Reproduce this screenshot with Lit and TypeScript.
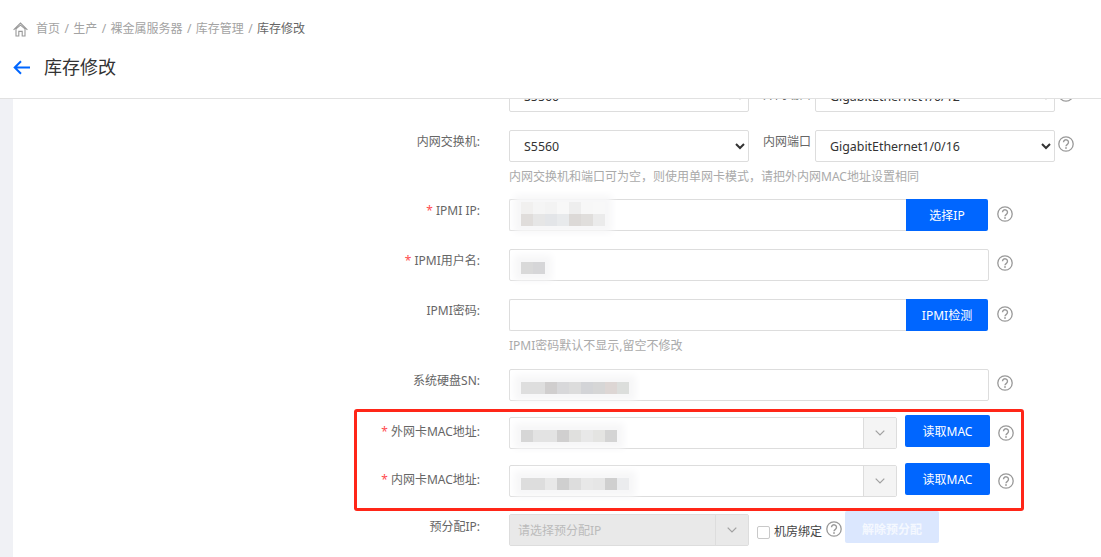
import { LitElement, html, css, svg } from "lit";
import { customElement } from "lit/decorators.js";

type Mask = { y: number; rows: string[][] };

const ipMask: Mask = {
  y: 2,
  rows: [
    ["#f1f0ef", "#f5f5f5", "#f3f3f3", "#f8f8f8", "#eeeeee", "#f7f7f7", "#f8f8f8"],
    ["#e0dddb", "#e6e6e6", "#e3e5e8", "#e8eaec", "#dcd9d7", "#e0dedc", "#ebebeb"],
  ],
};
const userMask: Mask = { y: 12, rows: [["#d9d9d9", "#d6d6d8"]] };
const snMask: Mask = {
  y: 12,
  rows: [["#dedede", "#dedede", "#d0cece", "#d8d8da", "#dcdcdc", "#d3d4d7", "#d6d6d6", "#ddd6d4", "#dcdedc"]],
};
const mac1Mask: Mask = {
  y: 12,
  rows: [["#d6d6d6", "#e3e3e3", "#e3e3e3", "#d0cfcf", "#e0e0de", "#e8e8e8", "#e4e4e2", "#d4d4d4"]],
};
const mac2Mask: Mask = {
  y: 12,
  rows: [["#dddddd", "#dddddd", "#e8e8e8", "#cfcfcf", "#dddddd", "#e8e8e8", "#e6e6e6", "#cfcfcf", "#ebecee"]],
};

const helpIcon = svg`<circle cx="8" cy="8" r="7.2" fill="none" stroke="#999" stroke-width="1.3"/><path d="M5.5 6.3a2.5 2.5 0 1 1 3.9 2c-.9.6-1.4 1-1.4 2" fill="none" stroke="#999" stroke-width="1.4"/><rect x="7.2" y="11.2" width="1.6" height="1.6" fill="#999"/>`;

@customElement("app-root")
export class AppRoot extends LitElement {
  static styles = css`
    :host {
      display: block;
      position: relative;
      width: 1101px;
      height: 557px;
      overflow: hidden;
      background: #fff;
      font-family: "Noto Sans", "Noto Sans CJK SC", sans-serif;
      font-size: 12px;
      color: #666;
    }
    * { box-sizing: border-box; }
    .header {
      height: 99px;
      border-bottom: 1px solid #e1e1e1;
      padding: 22px 0 0 13px;
    }
    .crumbs {
      display: flex;
      align-items: center;
      height: 14px;
      color: #a3a3a3;
      line-height: 14px;
    }
    .crumbs .home { width: 15px; height: 15px; margin-right: 8px; flex: none; }
    .crumbs .sep { width: 13.25px; text-align: center; }
    .crumbs .last { color: #666; }
    .title {
      display: flex;
      align-items: center;
      margin-top: 18px;
      height: 24px;
      font-size: 18px;
      color: #333;
    }
    .title svg { width: 17px; height: 15px; margin: 2px 14px 0 0; flex: none; }
    .body { display: flex; height: 458px; overflow: hidden; }
    .strip { width: 13px; background: #f0f1f5; flex: none; }
    .form { flex: 1; margin-top: -19px; display: flex; flex-direction: column; }
    .row { display: flex; align-items: flex-start; height: 32px; }
    .mt18 { margin-top: 18px; }
    .mt16 { margin-top: 16px; }
    .mt17 { margin-top: 17px; }
    .label {
      width: 496px;
      flex: none;
      padding-right: 29px;
      text-align: right;
      line-height: 24px;
      white-space: nowrap;
    }
    .label.low3 { padding-top: 3px; }
    .label.low1 { padding-top: 1px; }
    .star { color: #ff4d4f; }
    .sel {
      width: 240px;
      height: 32px;
      flex: none;
      border: 1px solid #ddd;
      border-radius: 2px;
      background: #fff;
      padding-left: 10px;
      font: 12.4px "Noto Sans", "Noto Sans CJK SC", sans-serif;
      color: #333;
      outline: none;
    }
    .port { width: 48px; margin: 0 4px 0 14px; line-height: 24px; flex: none; white-space: nowrap; color: #666; }
    .port.first { padding-top: 3px; }
    .help { width: 16px; height: 16px; flex: none; display: block; }
    .help.h-sel { margin: 6px 0 0 3px; }
    .help.h-in { margin: 7px 0 0 9px; }
    .help.h-full { margin: 6px 0 0 8px; }
    .help.h-mac { margin: 8px 0 0 8px; }
    .hint { margin: 7px 0 0 496px; line-height: 16px; color: #aaa; white-space: nowrap; }
    .h30 { height: 30px; }
    .h31 { height: 31px; }
    .input {
      display: flex;
      align-items: flex-start;
      height: 32px;
      flex: none;
      border: 1px solid #ddd;
      border-radius: 2px;
      background: #fff;
      padding-left: 11px;
    }
    .w397 { width: 397px; border-right: 0; border-radius: 2px 0 0 2px; }
    .w480 { width: 480px; }
    .btn {
      flex: none;
      height: 32px;
      border: 0;
      border-radius: 0 2px 2px 0;
      background: #0066ff;
      color: #fff;
      font: inherit;
      padding: 0;
      text-align: center;
    }
    .w82 { width: 82px; }
    .w85 { width: 85px; border-radius: 2px; margin: -2px 0 0 8px; }
    .combo {
      display: flex;
      width: 388px;
      height: 32px;
      flex: none;
      border: 1px solid #ddd;
      border-radius: 2px;
      background: #fff;
    }
    .combo .value { flex: 1; padding-left: 11px; display: flex; align-items: flex-start; }
    .caret {
      width: 33px;
      flex: none;
      background: #f4f4f4;
      border-left: 1px solid #ddd;
      display: flex;
      align-items: center;
      justify-content: center;
    }
    .caret svg { width: 10px; height: 6px; display: block; }
    .combo.off { width: 240px; background: #e9e9e9; }
    .combo.off .value { background: #e9e9e9; padding-left: 8px; align-items: center; color: #bbb; font-size: 12px; }
    .combo.off .caret { background: #e9e9e9; }
    .mask { flex: none; box-shadow: 0 0 7px 7px #f7f7f8; background: #f7f7f8; }
    .mrow { display: flex; }
    .cell { width: 12px; height: 12px; flex: none; }
    .check {
      width: 13px;
      height: 13px;
      flex: none;
      margin: 12px 0 0 8px;
      border: 1px solid #c9c9c9;
      border-radius: 2px;
      background: #fff;
    }
    .bind { margin: 6px 0 0 4px; width: 48px; flex: none; line-height: 24px; color: #444; white-space: nowrap; }
    .help.h-bind { margin: 7px 0 0 4px; }
    .btn.ghost {
      width: 94px;
      margin: -3px 0 0 3px;
      padding-top: 3px;
      border-radius: 2px;
      background: #dbe7fe;
      color: #f4f8ff;
      font-weight: bold;
    }
    .redbox {
      position: absolute;
      left: 354px;
      top: 409px;
      width: 670px;
      height: 102px;
      border: 3px solid #ff2618;
      border-radius: 3px;
      pointer-events: none;
    }
  `;

  private help(cls: string) {
    return html`<svg class="help ${cls}" viewBox="0 0 16 16">${helpIcon}</svg>`;
  }

  private mask(m: Mask) {
    return html`<div class="mask" style="margin-top:${m.y}px">
      ${m.rows.map(
        (r) => html`<div class="mrow">${r.map((c) => html`<div class="cell" style="background:${c}"></div>`)}</div>`
      )}
    </div>`;
  }

  private caret() {
    return html`<div class="caret">
      <svg viewBox="0 0 10 6"><path d="M.7.7 5 5 9.3.7" fill="none" stroke="#a0a0a0" stroke-width="1.2"/></svg>
    </div>`;
  }

  private portRow(cls: string, sw: string, name: string, portName: string, port: string, portCls: string) {
    return html`<div class="row ${cls}">
      <div class="label">${name}</div>
      <select class="sel"><option>${sw}</option></select>
      <div class="port ${portCls}">${portName}</div>
      <select class="sel"><option>${port}</option></select>
      ${this.help("h-sel")}
    </div>`;
  }

  render() {
    return html`
      <div class="header">
        <div class="crumbs">
          <svg class="home" viewBox="0 0 15 15" fill="none" stroke="#999" stroke-width="1.1">
            <path d="M.6 7.9 7.5 1l6.9 6.9M3 6.9 7.5 3.2 12 6.9V14H9.2V9.4H5.8V14H3z"/>
          </svg>
          <span>首页</span><span class="sep">/</span>
          <span>生产</span><span class="sep">/</span>
          <span>裸金属服务器</span><span class="sep">/</span>
          <span>库存管理</span><span class="sep">/</span>
          <span class="last">库存修改</span>
        </div>
        <div class="title">
          <svg viewBox="0 0 17 15" fill="none" stroke="#0066ff" stroke-width="2">
            <path d="M17 7.5H2M8 1.2 1.7 7.5 8 13.8"/>
          </svg>
          <span>库存修改</span>
        </div>
      </div>
      <div class="body">
        <div class="strip"></div>
        <div class="form">
          ${this.portRow("", "S5560", "外网交换机:", "外网端口", "GigabitEthernet1/0/12", "first")}
          ${this.portRow("mt18", "S5560", "内网交换机:", "内网端口", "GigabitEthernet1/0/16", "")}
          <div class="hint h30">内网交换机和端口可为空，则使用单网卡模式，请把外内网MAC地址设置相同</div>

          <div class="row">
            <div class="label"><span class="star">*</span> IPMI IP:</div>
            <div class="input w397">${this.mask(ipMask)}</div>
            <button class="btn w82">选择IP</button>
            ${this.help("h-in")}
          </div>

          <div class="row mt18">
            <div class="label"><span class="star">*</span> IPMI用户名:</div>
            <div class="input w480">${this.mask(userMask)}</div>
            ${this.help("h-full")}
          </div>

          <div class="row mt18">
            <div class="label">IPMI密码:</div>
            <div class="input w397"></div>
            <button class="btn w82">IPMI检测</button>
            ${this.help("h-in")}
          </div>
          <div class="hint h31">IPMI密码默认不显示,留空不修改</div>

          <div class="row">
            <div class="label">系统硬盘SN:</div>
            <div class="input w480">${this.mask(snMask)}</div>
            ${this.help("h-full")}
          </div>

          <div class="row mt16">
            <div class="label low3"><span class="star">*</span> 外网卡MAC地址:</div>
            <div class="combo"><div class="value">${this.mask(mac1Mask)}</div>${this.caret()}</div>
            <button class="btn w85">读取MAC</button>
            ${this.help("h-mac")}
          </div>

          <div class="row mt16">
            <div class="label low3"><span class="star">*</span> 内网卡MAC地址:</div>
            <div class="combo"><div class="value">${this.mask(mac2Mask)}</div>${this.caret()}</div>
            <button class="btn w85">读取MAC</button>
            ${this.help("h-mac")}
          </div>

          <div class="row mt17">
            <div class="label low1">预分配IP:</div>
            <div class="combo off"><div class="value">请选择预分配IP</div>${this.caret()}</div>
            <div class="check"></div>
            <div class="bind">机房绑定</div>
            ${this.help("h-bind")}
            <button class="btn ghost">解除预分配</button>
          </div>
        </div>
      </div>
      <div class="redbox"></div>
    `;
  }
}
